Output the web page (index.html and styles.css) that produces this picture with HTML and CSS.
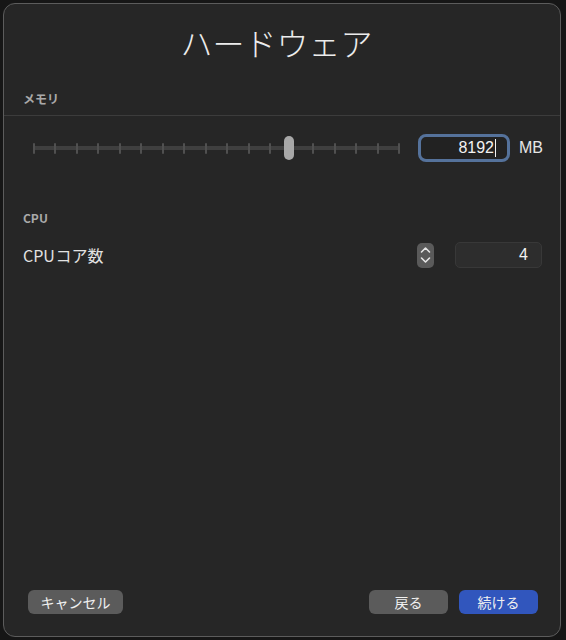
FILE: index.html
```html
<!DOCTYPE html>
<html lang="ja">
<head>
  <meta charset="UTF-8" />
  <meta name="viewport" content="width=device-width, initial-scale=1.0"/>
  <title>ハードウェア</title>
  <link rel="stylesheet" href="styles.css">
</head>
<body>

  <div class="window">
    <h1 class="title">ハードウェア</h1>

    <!-- Memory -->
    <div class="section-label">メモリ</div>
    <div class="divider"></div>

    <div class="memory-row">
      <div class="slider">
        <div class="track">
          <span class="tick"></span><span class="tick"></span><span class="tick"></span>
          <span class="tick"></span><span class="tick"></span><span class="tick"></span>
          <span class="tick"></span><span class="tick"></span><span class="tick"></span>
          <span class="tick"></span><span class="tick"></span><span class="tick"></span>
          <span class="tick"></span><span class="tick"></span><span class="tick"></span>
          <span class="tick"></span><span class="tick"></span><span class="tick"></span>
        </div>
        <div class="thumb"></div>
      </div>
      <div class="mem-input">8192<span class="caret"></span></div>
      <span class="unit">MB</span>
    </div>

    <!-- CPU -->
    <div class="section-label cpu-label">CPU</div>

    <div class="cpu-row">
      <span class="row-label">CPU コア数</span>
      <div class="stepper">
        <svg width="11" height="8" viewBox="0 0 11 8"><path d="M1.5 6 L5.5 2 L9.5 6" fill="none" stroke="#e6e6e6" stroke-width="1.6" stroke-linecap="round" stroke-linejoin="round"/></svg>
        <svg width="11" height="8" viewBox="0 0 11 8"><path d="M1.5 2 L5.5 6 L9.5 2" fill="none" stroke="#e6e6e6" stroke-width="1.6" stroke-linecap="round" stroke-linejoin="round"/></svg>
      </div>
      <div class="cpu-input">4</div>
    </div>

    <div class="spacer"></div>

    <!-- Buttons -->
    <div class="footer">
      <button class="btn btn-cancel">キャンセル</button>
      <div class="footer-right">
        <button class="btn">戻る</button>
        <button class="btn btn-primary">続ける</button>
      </div>
    </div>
  </div>

</body>
</html>
```

FILE: styles.css
```css
body {
  margin: 0;
  background: #161616;
  font-family: "Noto Sans CJK JP", "Noto Sans", sans-serif;
  color: #e6e6e6;
}

.window {
  box-sizing: border-box;
  margin: 3px 5px 0 3px;
  width: 558px;
  height: 634px;
  background: #262626;
  border: 1px solid #5c5c5c;
  border-radius: 12px;
  display: flex;
  flex-direction: column;
}

.title {
  margin: 18px 0 0;
  padding-right: 11px;
  font-size: 32px;
  font-weight: 300;
  line-height: 40px;
  text-align: center;
  color: #ececec;
}

.section-label {
  margin: 29px 0 0 19px;
  font-size: 12px;
  font-weight: 700;
  line-height: 16px;
  color: #a9a9a9;
}

.divider {
  margin-top: 8px;
  height: 1px;
  background: #3c3c3c;
}

.memory-row {
  margin-top: 18px;
  height: 28px;
  display: flex;
  align-items: center;
  padding-left: 29px;
}

.slider {
  position: relative;
  width: 367px;
  height: 28px;
  display: flex;
  align-items: center;
}

.track {
  width: 100%;
  height: 4px;
  background: #3f3f3f;
  border-radius: 2px;
  display: flex;
  justify-content: space-between;
  align-items: center;
}

.tick {
  width: 2px;
  height: 11px;
  background: #505050;
  border-radius: 1px;
}

/* thumb sits over the track */
.thumb {
  position: absolute;
  left: 251px;
  top: 2px;
  width: 10px;
  height: 24px;
  border-radius: 5px;
  background: #a8a8a8;
}

.mem-input {
  box-sizing: border-box;
  margin-left: 18px;
  width: 92px;
  height: 28px;
  border: 3px solid #55729b;
  border-radius: 8px;
  background: #222;
  display: flex;
  align-items: center;
  justify-content: flex-end;
  padding-right: 11px;
  font-family: "Liberation Sans", "Noto Sans", sans-serif;
  font-size: 16px;
  color: #f2f2f2;
}

.caret {
  width: 1px;
  height: 18px;
  margin-left: 1px;
  background: #f2f2f2;
}

.unit {
  margin-left: 9px;
  font-family: "Liberation Sans", "Noto Sans", sans-serif;
  font-size: 16px;
  color: #e6e6e6;
}

.cpu-label {
  margin-top: 48px;
}

.cpu-row {
  margin-top: 16px;
  height: 26px;
  display: flex;
  align-items: center;
  padding-left: 19px;
}

.row-label {
  flex: 1;
  font-size: 16px;
  color: #e2e2e2;
  word-spacing: -3px;
}

.stepper {
  width: 17px;
  height: 25px;
  border-radius: 5px;
  background: #5a5a5a;
  display: flex;
  flex-direction: column;
  align-items: center;
  justify-content: center;
  gap: 2px;
}

.cpu-input {
  box-sizing: border-box;
  margin: 0 18px 0 21px;
  width: 87px;
  height: 26px;
  border: 1px solid #383838;
  border-radius: 5px;
  background: #2d2d2d;
  display: flex;
  align-items: center;
  justify-content: flex-end;
  padding-right: 13px;
  font-family: "Liberation Sans", "Noto Sans", sans-serif;
  font-size: 16px;
  color: #f2f2f2;
}

.spacer {
  flex: 1;
}

.footer {
  display: flex;
  justify-content: space-between;
  align-items: center;
  padding: 0 22px 22px 24px;
}

.footer-right {
  display: flex;
  gap: 11px;
}

.btn {
  height: 24px;
  width: 79px;
  padding: 0;
  border: none;
  border-radius: 6px;
  background: #5b5b5b;
  font-family: "Noto Sans CJK JP", "Noto Sans", sans-serif;
  font-size: 14px;
  line-height: 24px;
  color: #f0f0f0;
}

.btn-cancel {
  width: 95px;
}

.btn-primary {
  background: #3156bd;
}
```
